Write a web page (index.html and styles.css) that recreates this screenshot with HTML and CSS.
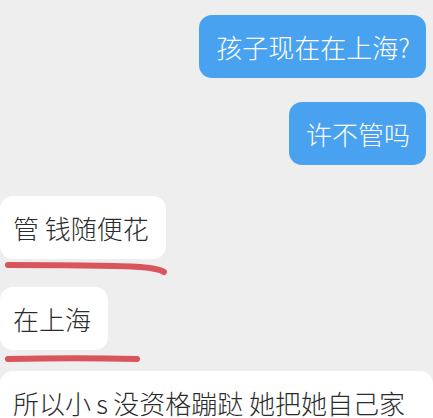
FILE: index.html
```html
<!DOCTYPE html>
<html>
<head>
    <meta charset="UTF-8">
    <title>chat</title>
    <link rel="stylesheet" href="styles.css">
</head>
<body>
    <div class="chat">
        <div class="row right first">
            <div class="bubble mine">孩子现在在上海?</div>
        </div>
        <div class="row right second">
            <div class="bubble mine">许不管吗</div>
        </div>
        <div class="row left third">
            <div class="bubble theirs">管 钱随便花</div>
        </div>
        <svg class="mark mark-one" width="180" height="22" viewBox="0 0 180 22">
            <path d="M8 8 C50 8, 110 8, 140 10 C152 11, 160 12, 164 15" />
        </svg>
        <div class="row left fourth">
            <div class="bubble theirs">在上海</div>
        </div>
        <svg class="mark mark-two" width="150" height="20" viewBox="0 0 150 20">
            <path d="M8 11 C50 10, 100 10, 137 11" />
        </svg>
        <div class="row left fifth">
            <div class="bubble theirs wide">所以小&thinsp;s&thinsp;没资格蹦跶 她把她自己家</div>
        </div>
    </div>
</body>
</html>
```

FILE: styles.css
```css
html, body {
    margin: 0;
    height: 100%;
}

body {
    background-color: #eeeeee;
    font-family: "Noto Sans CJK SC", "Noto Sans", sans-serif;
    font-weight: 300;
    overflow: hidden;
}

.chat {
    display: flex;
    flex-direction: column;
    padding-top: 15px;
}

.row {
    display: flex;
}

.row.right {
    justify-content: flex-end;
    padding-right: 7px;
}

.row.left {
    justify-content: flex-start;
}

.second {
    margin-top: 24px;
}

.third {
    margin-top: 31px;
}

.fourth {
    margin-top: 8px;
}

.fifth {
    margin-top: 3px;
}

.bubble {
    font-size: 26px;
    line-height: 35px;
    padding: 14px 16px;
    border-radius: 13px;
    white-space: nowrap;
}

.bubble.mine {
    background-color: #49a2f0;
    color: #ffffff;
    padding-left: 17px;
}

.bubble.theirs {
    background-color: #ffffff;
    color: #2b2b2b;
    padding-left: 13px;
    padding-right: 17px;
}

.bubble.wide {
    flex: 1;
    border-radius: 13px 13px 0 0;
}

.mark {
    display: block;
    margin-top: -2px;
    position: relative;
}

.mark path {
    fill: none;
    stroke: #d9545b;
    stroke-width: 6;
    stroke-linecap: round;
}
```
